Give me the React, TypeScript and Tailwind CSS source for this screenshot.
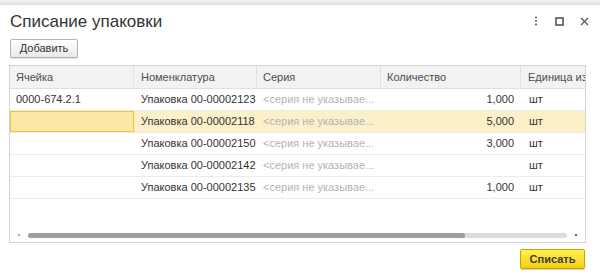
import React from "react";

const rows = [
  { cell: "0000-674.2.1", nom: "Упаковка 00-00002123", qty: "1,000", unit: "шт" },
  { cell: "", nom: "Упаковка 00-00002118", qty: "5,000", unit: "шт", selected: true },
  { cell: "", nom: "Упаковка 00-00002150", qty: "3,000", unit: "шт" },
  { cell: "", nom: "Упаковка 00-00002142", qty: "", unit: "шт" },
  { cell: "", nom: "Упаковка 00-00002135", qty: "1,000", unit: "шт" },
];

export default function App() {
  return (
    <div
      className="w-[600px] h-[279px] bg-white overflow-hidden text-[#333]"
      style={{ fontFamily: '"Liberation Sans", Arial, sans-serif' }}
    >
      {/* strip of the window behind */}
      <div className="h-[5px] bg-gradient-to-b from-[#f4f4f4] to-[#dedede]" />

      {/* title */}
      <div className="flex items-center h-[32px] pl-[10px] pr-[11px]">
        <div className="text-[17px] leading-none text-[#333]">Списание упаковки</div>
        <div className="ml-auto flex items-center gap-[16px]">
          <svg width="6" height="10" viewBox="0 0 6 10">
            <circle cx="3" cy="1.5" r="1.1" fill="#666" />
            <circle cx="3" cy="5" r="1.1" fill="#666" />
            <circle cx="3" cy="8.5" r="1.1" fill="#666" />
          </svg>
          <svg width="9" height="9" viewBox="0 0 9 9">
            <rect x="1" y="1" width="7" height="7" fill="none" stroke="#555" strokeWidth="1.6" />
          </svg>
          <svg width="9" height="9" viewBox="0 0 9 9">
            <path d="M1 1 L8 8 M8 1 L1 8" stroke="#555" strokeWidth="1.2" />
          </svg>
        </div>
      </div>

      {/* toolbar */}
      <div className="flex pl-[10px] mt-[2px]">
        <button className="h-[19px] w-[68px] border border-[#b5b5b5] rounded-[2px] bg-gradient-to-b from-white to-[#e9e9e9] text-[11px] leading-none text-[#333] shadow-[0_1px_1px_rgba(0,0,0,0.12)]">
          Добавить
        </button>
      </div>

      {/* table */}
      <div className="ml-[9px] mt-[7px] w-[577px] h-[178px] border border-[#d3d3d3] flex flex-col overflow-hidden text-[11px]">
        <div className="flex h-[23px] bg-[#f2f2f2] text-[#4d4d4d] border-b border-[#e0e0e0] shrink-0">
          <div className="w-[124px] pl-[6px] flex items-center border-r border-[#e0e0e0]">Ячейка</div>
          <div className="w-[123px] pl-[7px] flex items-center border-r border-[#e0e0e0]">Номенклатура</div>
          <div className="w-[124px] pl-[6px] flex items-center border-r border-[#e0e0e0]">Серия</div>
          <div className="w-[140px] pl-[6px] flex items-center border-r border-[#e0e0e0]">Количество</div>
          <div className="flex-1 pl-[7px] flex items-center whitespace-nowrap overflow-hidden">Единица изм</div>
        </div>
        {rows.map((r, i) => (
          <div
            key={i}
            className={
              "flex h-[22px] border-b border-[#ebebeb] shrink-0 " +
              (r.selected ? "bg-[#fcf0c8]" : "bg-white")
            }
          >
            <div
              className={
                "w-[124px] pl-[6px] flex items-center " +
                (r.selected ? "bg-[#fde7a4] border border-[#f2c237]" : "")
              }
            >
              {r.cell}
            </div>
            <div className="w-[123px] pl-[7px] flex items-center text-[#333]">{r.nom}</div>
            <div className="w-[124px] pl-[6px] flex items-center text-[#b3b3b3] whitespace-nowrap overflow-hidden">
              &lt;серия не указывае...
            </div>
            <div className="w-[140px] pr-[7px] flex items-center justify-end">{r.qty}</div>
            <div className="flex-1 pl-[8px] flex items-center">{r.unit}</div>
          </div>
        ))}
        <div className="flex-1" />
        <div className="flex items-center h-[6px] mb-[4px] shrink-0">
          <div className="w-[18px] flex justify-center">
            <div className="w-[2px] h-[2px] bg-[#aaa]" />
          </div>
          <div className="w-[539px] h-[5px] rounded-full bg-[#dcdcdc] flex">
            <div className="w-[437px] h-[5px] rounded-full bg-[#9e9e9e]" />
          </div>
          <div className="flex-1 flex justify-center">
            <div className="w-[2px] h-[2px] bg-[#666]" />
          </div>
        </div>
      </div>

      {/* footer */}
      <div className="flex justify-end pr-[15px] mt-[6px]">
        <button className="h-[20px] w-[65px] rounded-[2px] border border-[#c9a500] bg-gradient-to-b from-[#fff04a] to-[#f5cf00] text-[11px] leading-none font-bold text-[#3a3a3a] shadow-[0_1px_1px_rgba(0,0,0,0.2)]">
          Списать
        </button>
      </div>
    </div>
  );
}
